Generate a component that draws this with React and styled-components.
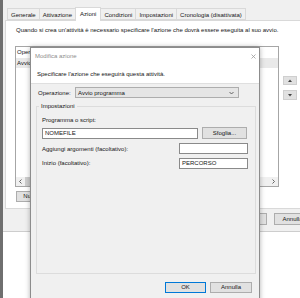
import React from "react";
import styled, { createGlobalStyle } from "styled-components";

const Global = createGlobalStyle`
  html, body { margin: 0; padding: 0; background: #fff; }
  body { font-family: "Liberation Sans", Arial, sans-serif; font-size: 6px; color: #151515; }
  * { box-sizing: border-box; }
`;

const Screen = styled.div`
  position: relative;
  width: 300px;
  height: 298px;
  overflow: hidden;
  display: flex;
  background: #fff;
`;

const EdgeStrip = styled.div`
  width: 3px;
  flex: none;
  background: #6f6f6f;
`;

const Column = styled.div`
  flex: 1;
  min-width: 0;
  display: flex;
  flex-direction: column;
`;

const Window = styled.div`
  flex: none;
  background: #f0f0f0;
  border-bottom: 1px solid #cdcdcd;
  display: flex;
  flex-direction: column;
`;

const TabBar = styled.div`
  display: flex;
  align-items: flex-end;
  height: 20px;
  padding-left: 5px;
`;

const Tab = styled.div`
  position: relative;
  height: ${(p) => (p.$active ? 14 : 12)}px;
  line-height: 12px;
  padding: 0 ${(p) => (p.$active ? 4 : 3)}px;
  margin-left: -1px;
  margin-bottom: ${(p) => (p.$active ? -1 : 0)}px;
  background: ${(p) => (p.$active ? "#fff" : "#f0f0f0")};
  border: 1px solid #d9d9d9;
  border-bottom: ${(p) => (p.$active ? "none" : "1px solid #d9d9d9")};
  z-index: ${(p) => (p.$active ? 1 : 0)};
  white-space: nowrap;
`;

const TabPanel = styled.div`
  margin-left: 2px;
  width: 320px;
  background: #fff;
  border: 1px solid #d9d9d9;
  padding: 5px 0 6px 9px;
`;

const Description = styled.div`
  height: 8px;
  line-height: 8px;
  padding-left: 1px;
  margin-bottom: 12px;
  white-space: nowrap;
`;

const ListRow = styled.div`
  display: flex;
  gap: 4px;
`;

const ListBox = styled.div`
  width: 264px;
  height: 141px;
  border: 1px solid #a6a6a6;
  display: flex;
  flex-direction: column;
  background: #fff;
`;

const ListHeader = styled.div`
  display: flex;
  height: 11px;
  line-height: 11px;
`;

const HeaderCell = styled.div`
  width: ${(p) => p.$w}px;
  padding-left: 1px;
  border-right: 1px solid #e5e5e5;
  white-space: nowrap;
`;

const ListItem = styled.div`
  height: 10px;
  line-height: 10px;
  padding-left: 1px;
  background: #e9e9e9;
  white-space: nowrap;
`;

const ListSpacer = styled.div`
  flex: 1;
`;

const HScroll = styled.div`
  height: 9px;
  display: flex;
  align-items: center;
  background: #f0f0f0;
`;

const ScrollArrow = styled.div`
  width: 9px;
  height: 9px;
  display: flex;
  align-items: center;
  justify-content: center;
`;

const ScrollThumb = styled.div`
  width: 150px;
  height: 9px;
  background: #cdcdcd;
`;

const ScrollTrack = styled.div`
  flex: 1;
`;

const SideButtons = styled.div`
  display: flex;
  flex-direction: column;
  gap: 5px;
  padding-top: 30px;
`;

const SmallButton = styled.div`
  width: 14px;
  height: ${(p) => p.$h}px;
  background: #e1e1e1;
  border: 1px solid #cfcfcf;
  display: flex;
  align-items: center;
  justify-content: center;
`;

const PanelButtons = styled.div`
  display: flex;
  margin-top: 4px;
  padding-left: 1px;
`;

const Button = styled.div`
  width: ${(p) => p.$w}px;
  height: ${(p) => p.$h || 11}px;
  line-height: ${(p) => (p.$h || 11) - 2}px;
  background: #e1e1e1;
  border: 1px solid ${(p) => (p.$primary ? "#0078d7" : "#adadad")};
  text-align: center;
  white-space: nowrap;
  overflow: hidden;
  flex: none;
`;

const Footer = styled.div`
  height: 22px;
  display: flex;
  gap: 7px;
  padding: 4px 0 0 227px;
`;

const BelowWindow = styled.div`
  flex: 1;
  background: #fff;
`;

/* ---------- Dialog ---------- */

const Dialog = styled.div`
  position: absolute;
  left: 30px;
  top: 47px;
  width: 230px;
  height: 262px;
  background: #f0f0f0;
  border: 1px solid #8c8c8c;
  box-shadow: 0 0 5px rgba(0, 0, 0, 0.3);
  display: flex;
  flex-direction: column;
`;

const TitleBar = styled.div`
  height: 16px;
  background: #fff;
  display: flex;
  align-items: center;
  justify-content: space-between;
  padding: 0 3px 0 4px;
  color: #8d8d8d;
`;

const DialogHeader = styled.div`
  height: 20px;
  background: #fff;
  border-bottom: 1px solid #dfdfdf;
  display: flex;
  align-items: center;
  padding-left: 6px;
  white-space: nowrap;
`;

const DialogBody = styled.div`
  padding-top: 3px;
  display: flex;
  flex-direction: column;
`;

const OpRow = styled.div`
  display: flex;
  align-items: center;
  height: 11px;
  padding-left: 7px;
`;

const OpLabel = styled.div`
  width: 37px;
`;

const Select = styled.div`
  width: 164px;
  height: 11px;
  background: #e5e5e5;
  border: 1px solid #adadad;
  display: flex;
  align-items: center;
  justify-content: space-between;
  padding: 0 4px 0 2px;
`;

const GroupBox = styled.fieldset`
  margin: 4px 0 0 5px;
  width: 220px;
  height: 172px;
  min-width: 0;
  border: 1px solid #dcdcdc;
  padding: 6px 7px 0 5px;
`;

const Legend = styled.legend`
  padding: 0 2px;
  margin-left: -3px;
  line-height: 8px;
  font-size: 6px;
`;

const FieldLabel = styled.div`
  height: 8px;
  line-height: 8px;
  margin-bottom: 3px;
`;

const FieldRow = styled.div`
  display: flex;
  align-items: center;
  gap: 4px;
  height: ${(p) => p.$h}px;
  margin-top: ${(p) => p.$mt || 0}px;
`;

const RowLabel = styled.div`
  flex: 1;
  white-space: nowrap;
`;

const TextInput = styled.div`
  width: ${(p) => p.$w}px;
  height: 11px;
  line-height: 9px;
  background: #fff;
  border: 1px solid #8a8a8a;
  padding-left: 2px;
  flex: none;
`;

const DialogButtons = styled.div`
  display: flex;
  gap: 4px;
  margin-top: 8px;
  padding-left: 134px;
`;

const Chevron = ({ dir }) => {
  const pts = {
    down: "0.5,1 2.5,3 4.5,1",
    left: "2.5,0.5 0.5,2.5 2.5,4.5",
    right: "0.5,0.5 2.5,2.5 0.5,4.5",
  }[dir];
  const w = dir === "down" ? 5 : 3;
  const h = dir === "down" ? 4 : 5;
  return (
    <svg width={w} height={h} viewBox={`0 0 ${w} ${h}`}>
      <polyline points={pts} fill="none" stroke="#555" strokeWidth="0.9" />
    </svg>
  );
};

const Tri = ({ up }) => (
  <svg width="4" height="3" viewBox="0 0 4 3">
    <polygon points={up ? "0,3 2,0.5 4,3" : "0,0 2,2.5 4,0"} fill="#444" />
  </svg>
);

const CloseIcon = () => (
  <svg width="5" height="5" viewBox="0 0 5 5">
    <path d="M0.5 0.5 L4.5 4.5 M4.5 0.5 L0.5 4.5" stroke="#9a9a9a" strokeWidth="0.8" />
  </svg>
);

export default function App() {
  return (
    <Screen>
      <Global />
      <EdgeStrip />
      <Column>
        <Window>
          <TabBar>
            <Tab>Generale</Tab>
            <Tab>Attivazione</Tab>
            <Tab $active>Azioni</Tab>
            <Tab>Condizioni</Tab>
            <Tab>Impostazioni</Tab>
            <Tab>Cronologia (disattivata)</Tab>
          </TabBar>
          <TabPanel>
            <Description>
              Quando si crea un'attività è necessario specificare l'azione che dovrà essere eseguita al suo avvio.
            </Description>
            <ListRow>
              <ListBox>
                <ListHeader>
                  <HeaderCell $w={62}>Operazione</HeaderCell>
                  <HeaderCell $w={120}>Dettagli</HeaderCell>
                </ListHeader>
                <ListItem>Avvio programma</ListItem>
                <ListSpacer />
                <HScroll>
                  <ScrollArrow>
                    <Chevron dir="left" />
                  </ScrollArrow>
                  <ScrollThumb />
                  <ScrollTrack />
                  <ScrollArrow>
                    <Chevron dir="right" />
                  </ScrollArrow>
                </HScroll>
              </ListBox>
              <SideButtons>
                <SmallButton $h={9}>
                  <Tri up />
                </SmallButton>
                <SmallButton $h={10}>
                  <Tri />
                </SmallButton>
              </SideButtons>
            </ListRow>
            <PanelButtons>
              <Button $w={37}>Nuova...</Button>
            </PanelButtons>
          </TabPanel>
          <Footer>
            <Button $w={37} $h={12}>OK</Button>
            <Button $w={37} $h={12}>Annulla</Button>
          </Footer>
        </Window>
        <BelowWindow />
      </Column>

      <Dialog>
        <TitleBar>
          <span>Modifica azione</span>
          <CloseIcon />
        </TitleBar>
        <DialogHeader>Specificare l'azione che eseguirà questa attività.</DialogHeader>
        <DialogBody>
          <OpRow>
            <OpLabel>Operazione:</OpLabel>
            <Select>
              <span>Avvio programma</span>
              <Chevron dir="down" />
            </Select>
          </OpRow>
          <GroupBox>
            <Legend>Impostazioni</Legend>
            <FieldLabel>Programma o script:</FieldLabel>
            <FieldRow $h={12}>
              <TextInput $w={156}>NOMEFILE</TextInput>
              <Button $w={45} $h={12}>Sfoglia...</Button>
            </FieldRow>
            <FieldRow $h={11} $mt={4}>
              <RowLabel>Aggiungi argomenti (facoltativo):</RowLabel>
              <TextInput $w={69} />
            </FieldRow>
            <FieldRow $h={12} $mt={3}>
              <RowLabel>Inizio (facoltativo):</RowLabel>
              <TextInput $w={69}>PERCORSO</TextInput>
            </FieldRow>
          </GroupBox>
          <DialogButtons>
            <Button $w={41} $primary>OK</Button>
            <Button $w={42}>Annulla</Button>
          </DialogButtons>
        </DialogBody>
      </Dialog>
    </Screen>
  );
}
